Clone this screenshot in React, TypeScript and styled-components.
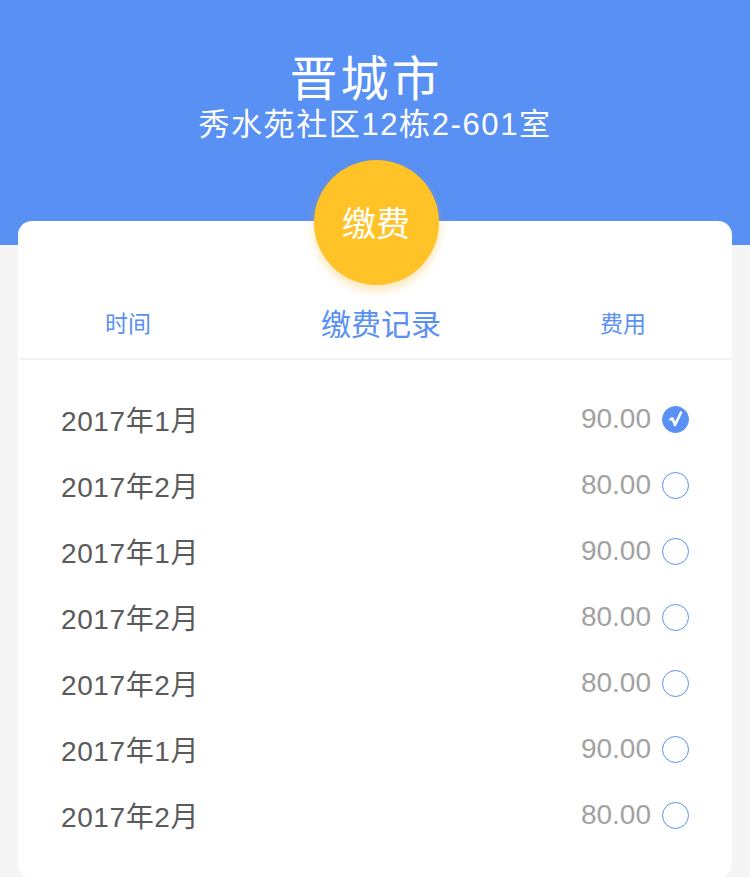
import React from "react";
import styled, { createGlobalStyle } from "styled-components";

const GlobalStyle = createGlobalStyle`
  html, body {
    margin: 0;
    padding: 0;
    background: #f5f5f5;
  }
  body {
    font-family: "Liberation Sans", "Noto Sans CJK SC", sans-serif;
  }
  * { box-sizing: border-box; }
`;

const Page = styled.div`
  width: 750px;
  height: 877px;
  overflow: hidden;
  background: #f5f5f5;
`;

const Header = styled.header`
  height: 245px;
  background: #5890f3;
  display: flex;
  flex-direction: column;
  align-items: center;
  padding-top: 45px;
  color: #ffffff;
`;

const City = styled.h1`
  margin: 0 18px 0 0;
  font-family: "Noto Sans CJK SC", sans-serif;
  font-weight: 400;
  font-size: 48px;
  line-height: 60px;
  letter-spacing: 3px;
`;

const Address = styled.div`
  font-family: "Liberation Sans", "Noto Sans CJK SC", sans-serif;
  font-size: 31px;
  line-height: 40px;
  letter-spacing: 1.6px;
`;

const Card = styled.section`
  margin: -24px 18px 0;
  background: #ffffff;
  border-radius: 14px;
  display: flex;
  flex-direction: column;
  padding-bottom: 30px;
`;

const Badge = styled.div`
  width: 125px;
  height: 125px;
  margin: -61px auto 0;
  border-radius: 50%;
  background: #ffc328;
  box-shadow: 0 5px 10px rgba(240, 180, 40, 0.35);
  display: flex;
  align-items: center;
  justify-content: center;
  color: #ffffff;
  font-family: "Noto Sans CJK SC", sans-serif;
  font-size: 34px;
  padding-bottom: 2px;
  position: relative;
  left: 1px;
`;

const TableHead = styled.div`
  height: 75px;
  display: flex;
  align-items: center;
  justify-content: space-between;
  padding: 0 86px 0 87px;
  border-bottom: 2px solid #f2f2f2;
  color: #5890f3;
  font-family: "Noto Sans CJK SC", sans-serif;
`;

const HeadLabel = styled.span`
  font-size: 23px;
`;

const HeadTitle = styled.span`
  font-size: 30px;
  margin-left: 11px;
`;

const List = styled.div`
  display: flex;
  flex-direction: column;
  padding-top: 26px;
`;

const Row = styled.div`
  height: 66px;
  display: flex;
  align-items: center;
  justify-content: space-between;
  padding: 0 43px;
`;

const DateText = styled.span`
  font-size: 28px;
  letter-spacing: 0.6px;
  color: #5a5a5a;
  font-family: "Liberation Sans", "Noto Sans CJK SC", sans-serif;
`;

const Right = styled.div`
  display: flex;
  align-items: center;
  gap: 11px;
`;

const Amount = styled.span`
  font-size: 28px;
  color: #a2a2a2;
`;

const Radio = styled.span<{ $checked: boolean }>`
  width: 27px;
  height: 27px;
  border-radius: 50%;
  border: 1.5px solid #5890f3;
  background: ${(p) => (p.$checked ? "#5890f3" : "#ffffff")};
  display: flex;
  align-items: center;
  justify-content: center;
`;

const records = [
  { date: "2017年1月", amount: "90.00", checked: true },
  { date: "2017年2月", amount: "80.00", checked: false },
  { date: "2017年1月", amount: "90.00", checked: false },
  { date: "2017年2月", amount: "80.00", checked: false },
  { date: "2017年2月", amount: "80.00", checked: false },
  { date: "2017年1月", amount: "90.00", checked: false },
  { date: "2017年2月", amount: "80.00", checked: false },
];

const Check = () => (
  <svg width="18" height="18" viewBox="0 0 18 18">
    <path
      d="M3.5 9.5 L5.5 8.5 L8 15 L14 2.5"
      fill="none"
      stroke="#ffffff"
      strokeWidth="2.6"
      strokeLinejoin="round"
      strokeLinecap="round"
    />
  </svg>
);

export default function App() {
  return (
    <Page>
      <GlobalStyle />
      <Header>
        <City>晋城市</City>
        <Address>秀水苑社区12栋2-601室</Address>
      </Header>
      <Card>
        <Badge>缴费</Badge>
        <TableHead>
          <HeadLabel>时间</HeadLabel>
          <HeadTitle>缴费记录</HeadTitle>
          <HeadLabel>费用</HeadLabel>
        </TableHead>
        <List>
          {records.map((r, i) => (
            <Row key={i}>
              <DateText>{r.date}</DateText>
              <Right>
                <Amount>{r.amount}</Amount>
                <Radio $checked={r.checked}>{r.checked && <Check />}</Radio>
              </Right>
            </Row>
          ))}
        </List>
      </Card>
    </Page>
  );
}
